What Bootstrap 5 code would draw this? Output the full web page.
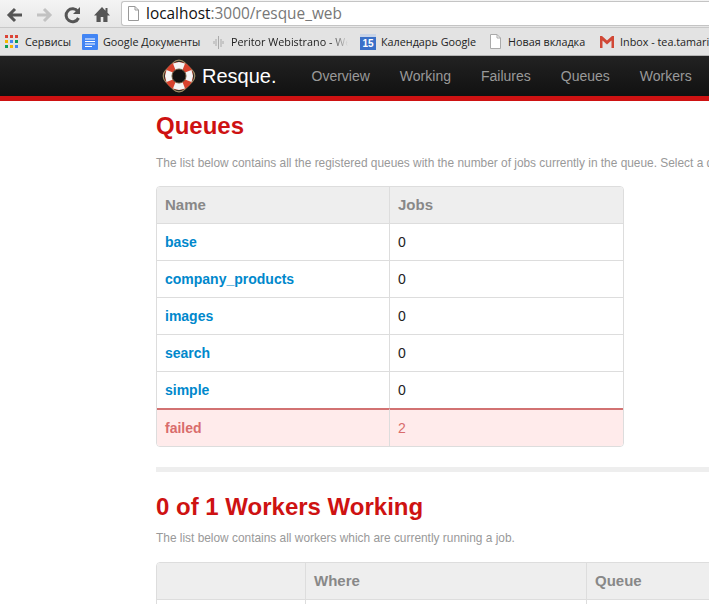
<!DOCTYPE html>
<html lang="en">
<head>
  <meta charset="UTF-8" />
  <title>Resque</title>
  <link href="https://cdn.jsdelivr.net/npm/bootstrap@5.3.3/dist/css/bootstrap.min.css" rel="stylesheet" />
  <style>
    html, body { height: 604px; overflow: hidden; }
    body { font-family: "Liberation Sans", Arial, sans-serif; background: #fff; }
    .toolbar { height: 27px; background: linear-gradient(#f4f4f4, #e6e6e6); padding-left: 3.5px; }
    .tool-btn { width: 22px; height: 22px; margin-right: 7px; flex: none; }
    .omnibox { margin-left: 1.5px; margin-top: 1px; height: 25px; flex: 1; background: #fff; border: 1px solid #c4c4c4; border-right: 0; border-radius: 3px 0 0 3px; padding-left: 6px; font: 15.4px/23px "Open Sans", sans-serif; color: #777; white-space: nowrap; }
    .omnibox svg { margin-right: 7px; }
    .omnibox b { font-weight: 400; color: #111; }
    .bookmarks { height: 29px; background: #e3e3e3; border-top: 1px solid #c8c8c8; border-bottom: 1px solid #b4b4b4; padding-left: 5px; font: 10.8px/27px "Open Sans", sans-serif; color: #222; white-space: nowrap; overflow: hidden; }
    .bm-item { flex: none; overflow: hidden; }
    .bm-item svg { flex: none; }
    .bm-apps { width: 77px; } .bm-apps svg { margin-right: 7px; }
    .bm-docs { width: 131px; } .bm-docs svg { margin-right: 5px; }
    .bm-peritor { width: 147px; } .bm-peritor svg { margin-right: 7px; }
    .bm-peritor span { width: 117px; overflow: hidden; -webkit-mask-image: linear-gradient(90deg, #000 85%, transparent); mask-image: linear-gradient(90deg, #000 85%, transparent); }
    .bm-cal { width: 130px; } .bm-cal svg { margin-right: 5px; }
    .bm-new { width: 110px; } .bm-new svg { margin-right: 7px; }
    .bm-inbox svg { margin-right: 6px; }
    .resque-nav { height: 45px; padding: 0 0 0 162px; background: linear-gradient(#222, #111); border-bottom: 5px solid #ce1212; flex-wrap: nowrap; justify-content: flex-start; border-radius: 0; }
    .resque-brand { font-size: 20px; line-height: 40px; color: #fff; padding: 0; margin: 0 20px 0 0; }
    .resque-brand svg { margin-right: 5px; }
    .resque-nav .nav-link { font-size: 14px; color: #999; padding: 0 15px; line-height: 40px; }
    .content { padding-left: 156px; width: 900px; }
    .page-title { font-size: 24px; font-weight: 700; color: #ce1212; line-height: 30px; margin: 0; }
    .title-first { margin-top: 10px; }
    .intro { font-size: 11.9px; line-height: 18px; color: #999; white-space: nowrap; margin: 0; }
    .intro-first { margin: 13px 0 14px; }
    .intro-second { margin: 7px 0 15px; }
    .queue-table { width: 468px; margin: 0; border-collapse: separate; border-spacing: 0; border: 1px solid #ddd; border-radius: 4px; font-size: 14px; table-layout: fixed; overflow: hidden; }
    .queue-table th, .queue-table td { height: 37px; padding: 0 8px; vertical-align: middle; border: 0; border-bottom: 1px solid #ddd; border-left: 1px solid #ddd; box-shadow: none; color: #222; background: #fff; }
    .queue-table tr > :first-child { border-left: 0; }
    .queue-table th { background: #eee; color: #888; font-size: 15px; }
    .queue-table a { color: #0088cc; font-weight: 700; text-decoration: none; }
    .queue-table tr:last-child td { border-bottom: 0; }
    .queue-table .failed-row td { background: #ffebeb; color: #d96c6c; border-top: 2px solid #d27272; height: 38px; }
    .queue-table .failed-row td:first-child { font-weight: 700; }
    .queue-table tr.before-failed td { border-bottom: 0; height: 36px; }
    .divider { height: 5px; background: #eee; border: 0; opacity: 1; margin: 20px 0 20px; }
    .workers-table { width: 700px; }
  </style>
</head>
<body>
  <div class="toolbar d-flex align-items-start">
    <div class="d-flex align-items-center pt-1">
      <svg class="tool-btn" viewBox="0 0 22 22"><path d="M18 11H6M11 5l-6 6 6 6" fill="none" stroke="#555" stroke-width="3"/></svg>
      <svg class="tool-btn" viewBox="0 0 22 22"><path d="M4 11h12M11 5l6 6-6 6" fill="none" stroke="#c2c2c2" stroke-width="3"/></svg>
      <svg class="tool-btn" viewBox="0 0 22 22"><path d="M16.500 14a6.500 6.500 0 1 1-.6-6.500" fill="none" stroke="#555" stroke-width="3"/><path d="M18 3v7h-7z" fill="#555"/></svg>
      <svg class="tool-btn" viewBox="0 0 22 22"><path d="M11 3 3 11.500h2.500V18h4.200v-5h2.600v5h4.200v-6.500H19l-2.500-2.700V4h-2v2.700z" fill="#555"/></svg>
    </div>
    <div class="omnibox d-flex align-items-center">
      <svg width="11" height="15" viewBox="0 0 11 15"><path d="M.5.500h6.500l3.500 3.500v10.500H.5z" fill="#fff" stroke="#999"/><path d="M7 .5V4h3.500" fill="none" stroke="#999"/></svg>
      <span><b>localhost</b>:3000/resque_web</span>
    </div>
  </div>

  <div class="bookmarks d-flex align-items-center">
    <span class="bm-item bm-apps d-flex align-items-center">
      <svg width="13" height="13" viewBox="0 0 13 13"><rect width="3" height="3" fill="#db4437"/><rect x="5" width="3" height="3" fill="#db4437"/><rect x="10" width="3" height="3" fill="#db4437"/><rect y="5" width="3" height="3" fill="#f4b400"/><rect x="5" y="5" width="3" height="3" fill="#4285f4"/><rect x="10" y="5" width="3" height="3" fill="#0f9d58"/><rect y="10" width="3" height="3" fill="#0f9d58"/><rect x="5" y="10" width="3" height="3" fill="#f4b400"/><rect x="10" y="10" width="3" height="3" fill="#4285f4"/></svg>Сервисы
    </span>
    <span class="bm-item bm-docs d-flex align-items-center">
      <svg width="16" height="16" viewBox="0 0 16 16"><rect width="16" height="16" rx="1" fill="#4285f4"/><path d="M3 5h10M3 7.500h10M3 10h10M3 12.500h7" stroke="#fff"/></svg>Google Документы
    </span>
    <span class="bm-item bm-peritor d-flex align-items-center">
      <svg width="11" height="16" viewBox="0 0 11 16"><path d="M1 7v3M3 5v7M5.500 2v13M8 5v8M10 7v3" stroke="#aaa"/></svg><span>Peritor Webistrano - Web</span>
    </span>
    <span class="bm-item bm-cal d-flex align-items-center">
      <svg width="16" height="16" viewBox="0 0 16 16"><rect width="16" height="16" fill="#3a70c8"/><rect width="16" height="3" fill="#c8d4e8"/><text x="8" y="13" text-anchor="middle" font-size="10" font-weight="700" fill="#fff" font-family="Liberation Sans">15</text></svg>Календарь Google
    </span>
    <span class="bm-item bm-new d-flex align-items-center">
      <svg width="11" height="15" viewBox="0 0 11 15"><path d="M.5.500h6.500l3.500 3.500v10.500H.5z" fill="#fff" stroke="#aaa"/><path d="M7 .5V4h3.500" fill="none" stroke="#aaa"/></svg>Новая вкладка
    </span>
    <span class="bm-item bm-inbox d-flex align-items-center">
      <svg width="14" height="12" viewBox="0 0 14 12"><path d="M0 0h2l5 4.500L12 0h2v12h-2.500V4.500L7 8.500l-4.500-4V12H0z" fill="#d14836"/></svg>Inbox - tea.tamarind
    </span>
  </div>

  <nav class="navbar resque-nav">
    <a class="navbar-brand resque-brand d-flex align-items-center" href="#">
      <svg width="35" height="36" viewBox="1 0 35 36">
        <rect x="4.500" y="4.500" width="27" height="27" rx="8" transform="rotate(45 18 18)" fill="#2e2a22" stroke="#a08e68" stroke-width="1.200"/>
        <circle cx="18" cy="18" r="14" fill="#d8422e"/>
        <path d="M12 5.500 18 4l6 1.500-2.500 6.500-3.500-.5-3.500.5zM12 30.500 18 32l6-1.500-2.500-6.500-3.500.5-3.500-.5zM5.500 12 4 18l1.500 6 6.500-2.500-.5-3.500.5-3.500zM30.500 12 32 18l-1.500 6-6.500-2.500.5-3.500-.5-3.500z" fill="#f4f4f4"/>
        <circle cx="18" cy="18" r="7" fill="#111" stroke="#6a5a40"/>
      </svg>
      Resque.
    </a>
    <ul class="navbar-nav flex-row">
      <li class="nav-item"><a class="nav-link" href="#">Overview</a></li>
      <li class="nav-item"><a class="nav-link" href="#">Working</a></li>
      <li class="nav-item"><a class="nav-link" href="#">Failures</a></li>
      <li class="nav-item"><a class="nav-link" href="#">Queues</a></li>
      <li class="nav-item"><a class="nav-link" href="#">Workers</a></li>
    </ul>
  </nav>

  <main class="content">
    <h1 class="page-title title-first">Queues</h1>
    <p class="intro intro-first">The list below contains all the registered queues with the number of jobs currently in the queue. Select a queue from above to view all jobs currently pending on the queue.</p>
    <table class="table queue-table">
      <colgroup><col style="width:232px"><col></colgroup>
      <thead><tr><th>Name</th><th>Jobs</th></tr></thead>
      <tbody id="queueRows"></tbody>
    </table>

    <hr class="divider">

    <h1 class="page-title">0 of 1 Workers Working</h1>
    <p class="intro intro-second">The list below contains all workers which are currently running a job.</p>
    <table class="table queue-table workers-table">
      <colgroup><col style="width:148px"><col style="width:281px"><col></colgroup>
      <thead><tr><th>&nbsp;</th><th>Where</th><th>Queue</th></tr></thead>
      <tbody><tr><td>&nbsp;</td><td>&nbsp;</td><td>&nbsp;</td></tr></tbody>
    </table>
  </main>

  <script>
    const queues = ["base", "company_products", "images", "search", "simple"];
    const rows = queues.map((name, i) =>
      `<tr class="${i === queues.length - 1 ? "before-failed" : ""}"><td><a href="#">${name}</a></td><td>0</td></tr>`
    );
    rows.push(`<tr class="failed-row"><td>failed</td><td>2</td></tr>`);
    document.getElementById("queueRows").innerHTML = rows.join("");
  </script>
  <script src="https://cdn.jsdelivr.net/npm/bootstrap@5.3.3/dist/js/bootstrap.bundle.min.js"></script>
</body>
</html>
